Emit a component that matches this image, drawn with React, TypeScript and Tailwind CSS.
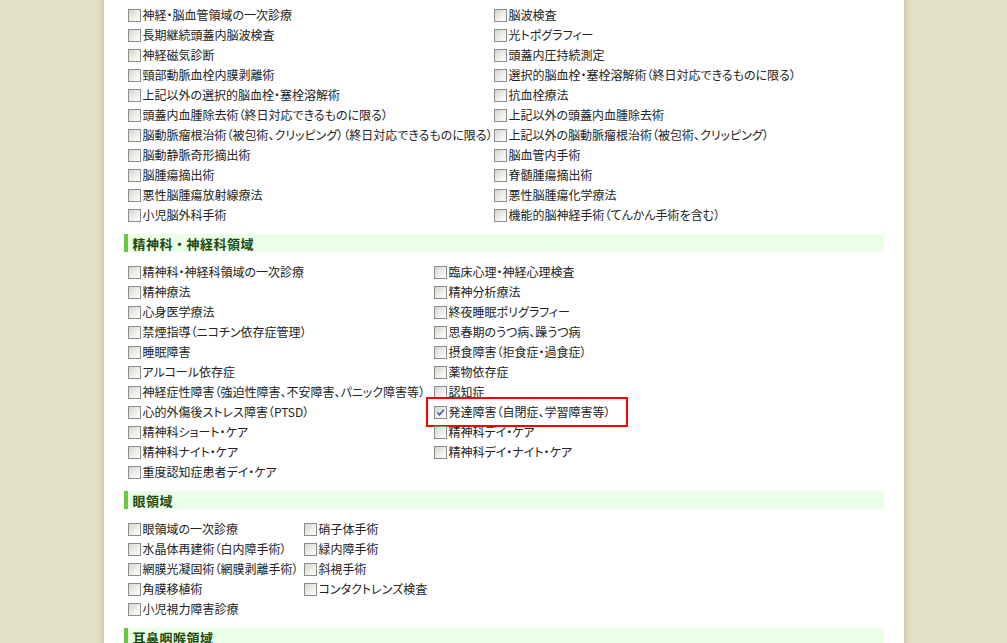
import React from 'react'

type Section = {
    title?: string
    colWidth: string
    left: string[]
    right: string[]
    checked?: string
}

const sections: Section[] = [
    {
        colWidth: 'grid-cols-[366px_1fr]',
        left: [
            '神経・脳血管領域の一次診療',
            '長期継続頭蓋内脳波検査',
            '神経磁気診断',
            '頸部動脈血栓内膜剥離術',
            '上記以外の選択的脳血栓・塞栓溶解術',
            '頭蓋内血腫除去術（終日対応できるものに限る）',
            '脳動脈瘤根治術（被包術、クリッピング）（終日対応できるものに限る）',
            '脳動静脈奇形摘出術',
            '脳腫瘍摘出術',
            '悪性脳腫瘍放射線療法',
            '小児脳外科手術',
        ],
        right: [
            '脳波検査',
            '光トポグラフィー',
            '頭蓋内圧持続測定',
            '選択的脳血栓・塞栓溶解術（終日対応できるものに限る）',
            '抗血栓療法',
            '上記以外の頭蓋内血腫除去術',
            '上記以外の脳動脈瘤根治術（被包術、クリッピング）',
            '脳血管内手術',
            '脊髄腫瘍摘出術',
            '悪性脳腫瘍化学療法',
            '機能的脳神経手術（てんかん手術を含む）',
        ],
    },
    {
        title: '精神科・神経科領域',
        colWidth: 'grid-cols-[306px_1fr]',
        left: [
            '精神科・神経科領域の一次診療',
            '精神療法',
            '心身医学療法',
            '禁煙指導（ニコチン依存症管理）',
            '睡眠障害',
            'アルコール依存症',
            '神経症性障害（強迫性障害、不安障害、パニック障害等）',
            '心的外傷後ストレス障害（PTSD）',
            '精神科ショート・ケア',
            '精神科ナイト・ケア',
            '重度認知症患者デイ・ケア',
        ],
        right: [
            '臨床心理・神経心理検査',
            '精神分析療法',
            '終夜睡眠ポリグラフィー',
            '思春期のうつ病、躁うつ病',
            '摂食障害（拒食症・過食症）',
            '薬物依存症',
            '認知症',
            '発達障害（自閉症、学習障害等）',
            '精神科デイ・ケア',
            '精神科デイ・ナイト・ケア',
        ],
        checked: '発達障害（自閉症、学習障害等）',
    },
    {
        title: '眼領域',
        colWidth: 'grid-cols-[176px_1fr]',
        left: [
            '眼領域の一次診療',
            '水晶体再建術（白内障手術）',
            '網膜光凝固術（網膜剥離手術）',
            '角膜移植術',
            '小児視力障害診療',
        ],
        right: ['硝子体手術', '緑内障手術', '斜視手術', 'コンタクトレンズ検査'],
    },
    {
        // only the heading is in view, the list below is off screen
        title: '耳鼻咽喉領域',
        colWidth: 'grid-cols-[266px_1fr]',
        left: [],
        right: [],
    },
]

export default function App() {
    return (
        <div className="h-[643px] w-full overflow-hidden bg-[#e3e2c8] font-['Noto_Sans_CJK_JP',sans-serif]">
            <div className="mx-auto h-full w-[800px] bg-white px-[20px] pt-[5px] shadow-[0_0_6px_2px_rgba(170,168,110,0.55)]">
                {sections.map((section, i) => (
                    <SectionBlock key={i} section={section} />
                ))}
            </div>
        </div>
    )
}

const SectionBlock = ({ section }: { section: Section }) => {
    const rows = Math.max(section.left.length, section.right.length)

    return (
        <div>
            {section.title && (
                <div className="mb-[10px] mt-[9px] flex h-[18px] items-center border-l-[4px] border-solid border-[#66c845] bg-[#eaffe6] pl-[5px]">
                    <h3 className="text-[13px] font-bold leading-none tracking-[0.5px] text-[#1d4a12]">
                        {section.title}
                    </h3>
                </div>
            )}
            <div className={`grid pl-[4px] ${section.colWidth}`}>
                {Array.from({ length: rows }).map((_, i) => (
                    <React.Fragment key={i}>
                        <Item label={section.left[i]} checked={section.left[i] === section.checked} />
                        <Item label={section.right[i]} checked={section.right[i] === section.checked} />
                    </React.Fragment>
                ))}
            </div>
        </div>
    )
}

const Item = ({ label, checked }: { label?: string; checked?: boolean }) => {
    if (!label) return <div className="h-[20px]" />

    return (
        <label className="relative flex h-[20px] items-center whitespace-nowrap">
            <CheckBox checked={checked} />
            <span className="ml-[2px] text-[12px] leading-none text-[#222] [font-feature-settings:'palt']">
                {label}
            </span>
            {/* highlight box for the selected one */}
            {checked && (
                <span className="pointer-events-none absolute -left-[8px] -top-[5px] h-[30px] w-[202px] border-2 border-solid border-[#f00]" />
            )}
        </label>
    )
}

const CheckBox = ({ checked }: { checked?: boolean }) => {
    return (
        <span className="relative inline-block h-[13px] w-[13px] shrink-0 border border-solid border-[#8c8c8c] bg-gradient-to-br from-[#d6d6cf] via-[#ecece8] to-white">
            {checked && (
                <svg viewBox="0 0 11 11" className="absolute left-0 top-0 h-[11px] w-[11px]">
                    <path d="M2.5 5.5 L4.5 7.8 L8.8 2.8" fill="none" stroke="#3c55b5" strokeWidth="1.6" />
                </svg>
            )}
        </span>
    )
}
